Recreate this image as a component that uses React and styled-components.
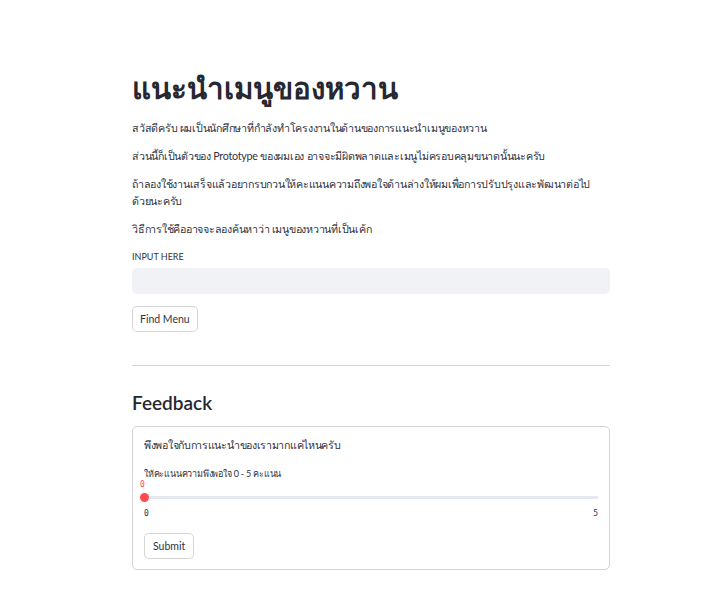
import React from "react";
import styled, { createGlobalStyle } from "styled-components";

const Global = createGlobalStyle`
  html, body { margin: 0; padding: 0; background: #ffffff; }
  body { font-family: "Lato", "Noto Sans", sans-serif; color: #31333f; }
  * { box-sizing: border-box; }
`;

const Main = styled.main`
  width: 478px;
  margin-left: 132px;
  padding-top: 65px;
  padding-bottom: 40px;
  display: flex;
  flex-direction: column;
`;

const Title = styled.h1`
  margin: 0 0 8px;
  font-size: 29.5px;
  line-height: 46px;
  font-weight: 700;
  color: #262730;
`;

const Para = styled.p`
  margin: 0 0 11px;
  font-size: 10.7px;
  line-height: 17px;
  letter-spacing: -0.25px;
  color: #31333f;
`;

const Keep = styled.span`
  white-space: nowrap;
`;

const Label = styled.label`
  display: block;
  font-size: 9px;
  line-height: 14px;
  color: #31333f;
  margin: 2px 0 4px;
`;

const Input = styled.div`
  height: 26px;
  border-radius: 5px;
  background: #f0f2f6;
`;

const Button = styled.button`
  align-self: flex-start;
  height: 26px;
  padding: 0 ${(p) => p.$px ?? 7}px;
  border: 1px solid rgba(49, 51, 63, 0.2);
  border-radius: 5px;
  background: #ffffff;
  font-family: inherit;
  font-size: 10.5px;
  color: #31333f;
  margin-top: ${(p) => p.$mt ?? 0}px;
`;

const Divider = styled.hr`
  margin: 33px 0 0;
  border: none;
  border-top: 1px solid rgba(49, 51, 63, 0.2);
`;

const H2 = styled.h2`
  margin: 24px 0 10px;
  font-size: 19px;
  line-height: 26px;
  font-weight: 600;
  color: #262730;
`;

const Form = styled.form`
  border: 1px solid rgba(49, 51, 63, 0.2);
  border-radius: 5px;
  padding: 9px 11px 10px 11px;
  display: flex;
  flex-direction: column;
`;

const FormText = styled.p`
  margin: 0 0 14px;
  font-size: 10.7px;
  line-height: 17px;
  letter-spacing: -0.3px;
`;

const SliderLabel = styled.div`
  font-size: 9px;
  line-height: 13px;
  letter-spacing: -0.2px;
  margin-bottom: 2px;
`;

const SliderBox = styled.div`
  position: relative;
  height: 22px;
`;

const Track = styled.div`
  position: absolute;
  left: -1px;
  right: 0;
  top: 14px;
  height: 3px;
  border-radius: 2px;
  background: #e6e8ef;
`;

const Thumb = styled.div`
  position: absolute;
  left: -4px;
  top: 11px;
  width: 9px;
  height: 9px;
  border-radius: 50%;
  background: #ff4b4b;
`;

const ThumbValue = styled.div`
  position: absolute;
  left: -4px;
  top: -2px;
  font-size: 8px;
  line-height: 10px;
  color: #ff4b4b;
  font-family: "DejaVu Sans Mono", "Liberation Mono", monospace;
`;

const Ticks = styled.div`
  display: flex;
  justify-content: space-between;
  font-family: "DejaVu Sans Mono", "Liberation Mono", monospace;
  font-size: 8px;
  line-height: 12px;
  margin-top: 4px;
`;

export default function App() {
  return (
    <>
      <Global />
      <Main>
        <Title>แนะนำเมนูของหวาน</Title>
        <Para>สวัสดีครับ ผมเป็นนักศึกษาที่กำลังทำโครงงานในด้านของการแนะนำเมนูของหวาน</Para>
        <Para>ส่วนนี้ก็เป็นตัวของ Prototype ของผมเอง อาจจะมีผิดพลาดและเมนูไม่ครอบคลุมขนาดนั้นนะครับ</Para>
        <Para>
          ถ้าลองใช้งานเสร็จแล้วอยากรบกวนให้คะแนนความถึงพอใจด้านล่างให้ผมเพื่อการปรับปรุงและพัฒนาต่อไป<Keep>ด้วยนะครับ</Keep>
        </Para>
        <Para>วิธีการใช้คืออาจจะลองค้นหาว่า เมนูของหวานที่เป็นเค้ก</Para>
        <Label>INPUT HERE</Label>
        <Input />
        <Button $mt={12}>Find Menu</Button>
        <Divider />
        <H2>Feedback</H2>
        <Form onSubmit={(e) => e.preventDefault()}>
          <FormText>พึงพอใจกับการแนะนำของเรามากแค่ไหนครับ</FormText>
          <SliderLabel>ให้คะแนนความพึงพอใจ 0 - 5 คะแนน</SliderLabel>
          <SliderBox>
            <Track />
            <Thumb />
            <ThumbValue>0</ThumbValue>
          </SliderBox>
          <Ticks>
            <span>0</span>
            <span>5</span>
          </Ticks>
          <Button $mt={13} $px={8}>Submit</Button>
        </Form>
      </Main>
    </>
  );
}
